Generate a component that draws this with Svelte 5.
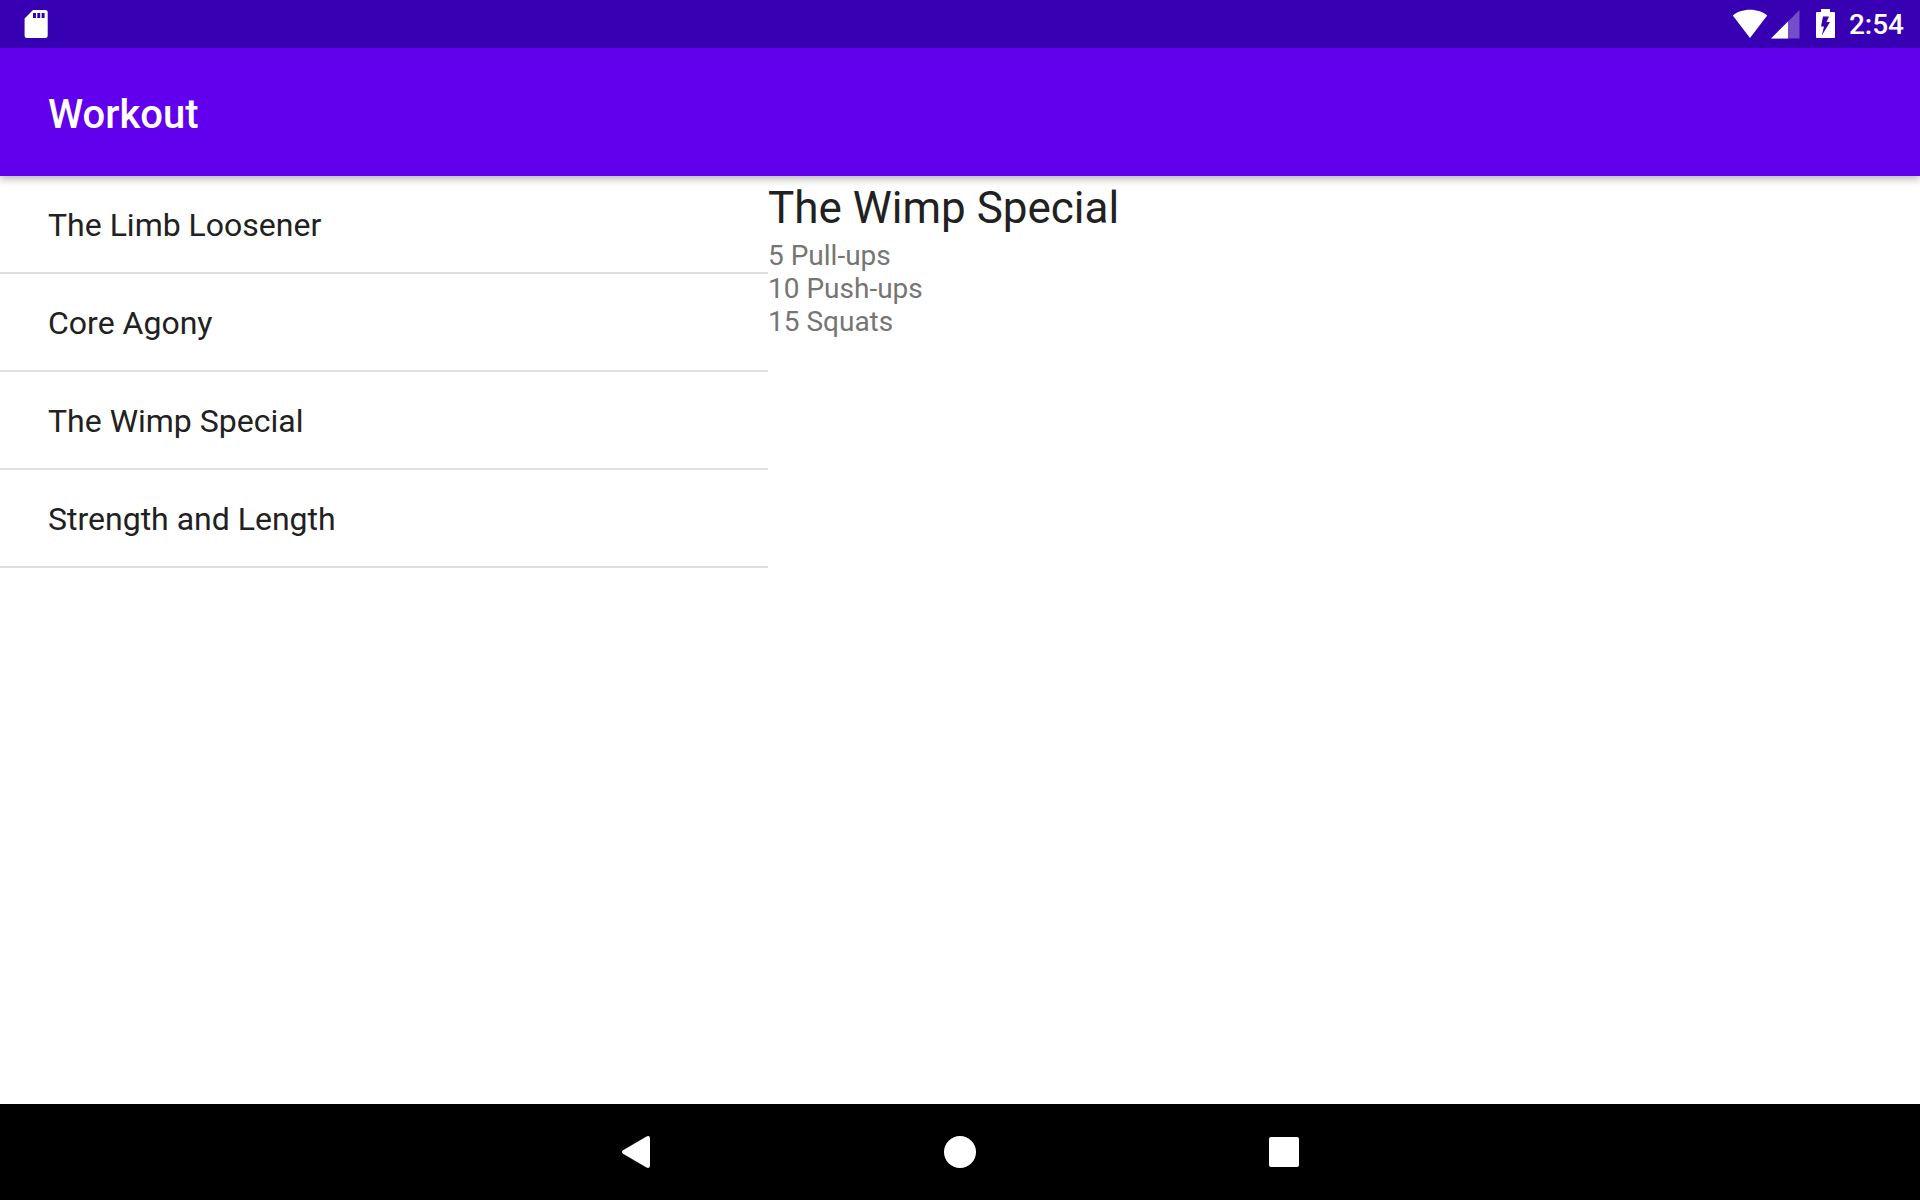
<script>
  const workouts = [
    { name: 'The Limb Loosener', steps: ['5 Handstand push-ups', '10 1-legged squats', '15 Pull-ups'] },
    { name: 'Core Agony', steps: ['100 Pull-ups', '100 Push-ups', '100 Sit-ups', '100 Squats'] },
    { name: 'The Wimp Special', steps: ['5 Pull-ups', '10 Push-ups', '15 Squats'] },
    { name: 'Strength and Length', steps: ['500 meter run', '21 x 1.5 pood kettleball swing', '21 x Pull-ups'] }
  ];

  let selected = $state(2);
  let workout = $derived(workouts[selected]);
</script>

<div class="screen">
  <div class="status">
    <svg width="24" height="28" viewBox="0 0 24 28" aria-hidden="true">
      <path fill-rule="evenodd" d="M9 0H21.3Q23.7 0 23.7 2.2V25.8Q23.7 28 21.3 28H2.9Q.6 28 .6 25.8V8.5ZM9 3V8H12V3ZM13.300 3V8H16.200V3ZM17.600 3V8H20.600V3Z" />
    </svg>
    <div class="indicators">
      <svg width="36" height="30" viewBox="0 0 36 30" aria-hidden="true">
        <path d="M18 29 .8 6.5C5 3 11 .8 18 .8S31 3 35.200 6.500Z" />
      </svg>
      <svg width="29" height="30" viewBox="0 0 29 30" aria-hidden="true">
        <path opacity=".3" d="M0 29.500 28.500 1V29.500Z" />
        <path d="M0 29.500 17 12.500V29.500Z" />
      </svg>
      <svg class="battery" width="19" height="30" viewBox="0 0 19 30" aria-hidden="true">
        <path fill-rule="evenodd" d="M5 0H14V3H18Q19 3 19 4V28Q19 29 18 29H1Q0 29 0 28V4Q0 3 1 3H5ZM7 7.500 5 17.500H8L5.800 26.500 14 13H10.500L13 7.500Z" />
      </svg>
      <time>2:54</time>
    </div>
  </div>

  <header>
    <h1>Workout</h1>
  </header>

  <main>
    <ul>
      {#each workouts as item, i}
        <li><button onclick={() => (selected = i)}>{item.name}</button></li>
      {/each}
    </ul>
    <section>
      <h2>{workout.name}</h2>
      {#each workout.steps as step}
        <p>{step}</p>
      {/each}
    </section>
  </main>

  <nav>
    <button aria-label="Back">
      <svg width="28" height="32" viewBox="0 0 28 32" aria-hidden="true">
        <path d="M1 14.300 24.500.4Q28-.8 28 2.500V29.500Q28 32.800 24.500 31.600L1 17.700Q-1 16 1 14.300Z" />
      </svg>
    </button>
    <button aria-label="Home">
      <svg width="32" height="32" viewBox="0 0 32 32" aria-hidden="true"><circle cx="16" cy="16" r="16" /></svg>
    </button>
    <button aria-label="Overview">
      <svg width="30" height="30" viewBox="0 0 30 30" aria-hidden="true"><rect width="30" height="30" rx="2" /></svg>
    </button>
  </nav>
</div>

<style>
  :global(body) {
    margin: 0;
    background: #fff;
  }

  .screen {
    display: flex;
    flex-direction: column;
    min-height: 100vh;
    font-family: Roboto, 'Liberation Sans', sans-serif;
    color: #212121;
  }

  svg {
    display: block;
    fill: #fff;
  }

  button {
    margin: 0;
    border: 0;
    background: none;
    font: inherit;
    color: inherit;
    cursor: pointer;
  }

  .status {
    z-index: 2;
    display: flex;
    justify-content: space-between;
    align-items: center;
    height: 48px;
    padding: 0 16px 0 24px;
    background: #3700b3;
    color: #fff;
  }

  .indicators {
    display: flex;
    align-items: center;
    gap: 3px;
  }

  .battery {
    margin: 0 11px 0 13px;
  }

  time {
    padding-top: 2px;
    font-size: 28px;
    font-weight: 500;
    line-height: 46px;
  }

  header {
    z-index: 1;
    display: flex;
    align-items: center;
    box-sizing: border-box;
    height: 128px;
    padding: 6px 48px 0;
    background: #6200ee;
    color: #fff;
    box-shadow: 0 3px 8px rgba(0, 0, 0, 0.3);
  }

  h1 {
    margin: 0;
    font-size: 40px;
    font-weight: 500;
    line-height: 48px;
  }

  main {
    flex: 1;
    display: grid;
    grid-template-columns: 2fr 3fr;
  }

  ul {
    margin: 0;
    padding: 0;
    list-style: none;
  }

  li {
    border-bottom: 2px solid #e0e0e0;
  }

  li button {
    display: block;
    width: 100%;
    padding: 2px 48px 0;
    font-size: 32px;
    line-height: 94px;
    text-align: left;
  }

  section {
    padding-top: 6px;
  }

  h2 {
    margin: 0 0 5px;
    font-size: 44px;
    font-weight: 400;
    line-height: 52px;
  }

  p {
    margin: 0;
    font-size: 28px;
    line-height: 33px;
    color: #757575;
  }

  nav {
    display: grid;
    grid-template-columns: repeat(3, 324px);
    justify-content: center;
    height: 96px;
    background: #000;
  }

  nav button {
    display: flex;
    align-items: center;
    justify-content: center;
    padding: 0;
  }
</style>
